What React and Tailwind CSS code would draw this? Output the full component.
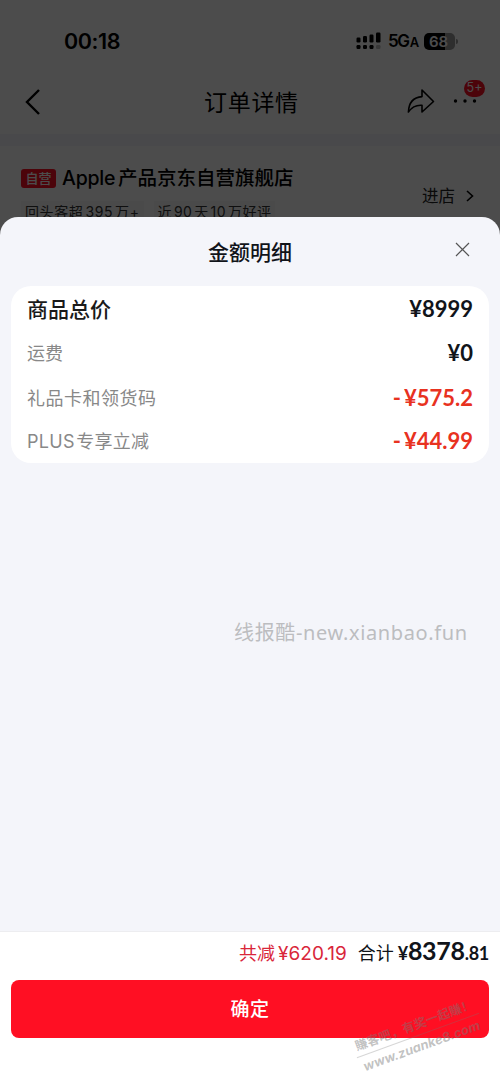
import React, { useState } from "react";

const rows = [
  {
    label: "商品总价",
    value: "¥8999",
    row: "h-[46px]",
    labelClass: "text-[21px] font-medium text-[#1a1a1a]",
    valueClass: "text-[#11141a]",
  },
  {
    label: "运费",
    value: "¥0",
    row: "h-[43px]",
    labelClass: "text-[18px] text-[#888888]",
    valueClass: "text-[#11141a]",
  },
  {
    label: "礼品卡和领货码",
    value: "¥575.2",
    minus: true,
    row: "h-[47px]",
    labelClass: "text-[18px] tracking-[0.5px] text-[#888888]",
    valueClass: "text-[#e8321f]",
  },
  {
    label: "PLUS 专享立减",
    value: "¥44.99",
    minus: true,
    row: "h-[39px]",
    labelClass: "text-[18px] tracking-[0.3px] text-[#888888] [word-spacing:-4px]",
    valueClass: "text-[#e8321f]",
  },
];

function StatusBar() {
  return (
    <div className="flex h-[82px] items-center pl-[64px] pr-[42px]">
      <span className="mt-px text-[21.5px] font-semibold leading-none tracking-[-0.4px] text-black">
        00:18
      </span>
      <svg className="ml-auto" width="26" height="18" viewBox="0 0 26 18">
        <rect x="0.5" y="5.5" width="4" height="5" rx="1.2" />
        <rect x="7" y="4" width="4" height="6.5" rx="1.2" />
        <rect x="13.5" y="2.5" width="4" height="8" rx="1.2" />
        <rect x="20" y="0.5" width="4.5" height="10" rx="1.2" />
        <rect x="0.5" y="13" width="4" height="4" rx="1.2" />
        <rect x="7" y="13" width="4" height="4" rx="1.2" />
        <rect x="13.5" y="13" width="4" height="4" rx="1.2" />
        <rect x="20" y="13" width="4.5" height="4" rx="1.2" opacity="0.25" />
      </svg>
      <span className="ml-[6px] mt-px w-[30px] whitespace-nowrap text-[17px] font-semibold leading-none tracking-[-1.4px] text-black">
        5G<span className="ml-px text-[13px]">A</span>
      </span>
      <div className="ml-[6px] flex h-[17px] w-[31px] items-center justify-center rounded-[5px] bg-[linear-gradient(to_right,#000_68%,#999_68%)] pr-[2px] text-[15px] font-semibold leading-none text-white">
        68
      </div>
      <div className="ml-px h-[5px] w-[2px] rounded-r bg-[#999]" />
    </div>
  );
}

function NavBar() {
  return (
    <div className="flex h-[52px] items-start pl-[24px] pr-[14px]">
      <svg
        className="mt-[6px]"
        width="18"
        height="28"
        viewBox="0 0 18 28"
        fill="none"
        stroke="#000"
        strokeWidth="2.4"
      >
        <path d="M15 2 L3 14 L15 26" />
      </svg>
      <h1 className="ml-[162px] mt-[4px] text-[23px] leading-[34px] tracking-[0.7px] text-black">
        订单详情
      </h1>
      <svg
        className="ml-auto mr-[-1px] mt-[6px]"
        width="28"
        height="26"
        viewBox="0 0 28 26"
        fill="none"
        stroke="#000"
        strokeWidth="1.6"
        strokeLinejoin="round"
      >
        <path d="M15 2 L26.5 13.5 L15 24 V17.3 C8.5 16.8 4.6 19.4 1.4 24 C1.8 14.6 6 9.3 15 8.6 Z" />
      </svg>
      <div className="relative ml-[18px] h-[40px] w-[34px]">
        <svg className="mt-[17px]" width="26" height="4" viewBox="0 0 26 4">
          <circle cx="3.5" cy="2" r="1.7" />
          <circle cx="13" cy="2" r="1.7" />
          <circle cx="22.5" cy="2" r="1.7" />
        </svg>
        <span className="absolute left-[12px] top-[-2px] flex h-[17px] w-[21px] items-center justify-center rounded-full bg-[#ff0f23] text-[12.5px] leading-none text-white">
          5+
        </span>
      </div>
    </div>
  );
}

function Shop() {
  return (
    <div className="flex justify-between pl-[21px] pr-[24px] pt-[18px]">
      <div>
        <div className="flex h-[28px] items-center">
          <span className="flex h-[19px] w-[35px] items-center justify-center rounded-[3px] bg-[#ff0f23] text-[13px] font-medium leading-none text-white">
            自营
          </span>
          <span className="ml-[6px] mt-[2px] whitespace-nowrap text-[19.5px] font-medium leading-none text-black [word-spacing:-2.5px]">
            <span className="tracking-[-0.2px]">Apple</span> 产品京东自营旗舰店
          </span>
        </div>
        <div className="mt-[9px] flex gap-[10px] whitespace-nowrap text-[14px] leading-[22px] text-[#333]">
          <span className="bg-[#f8f8f8] px-[4px] tracking-[0.6px] [word-spacing:-2.5px]">
            回头客超 395 万+
          </span>
          <span className="bg-[#f8f8f8] px-[4px] tracking-[0.5px] [word-spacing:-2.6px]">
            近 90 天 10 万好评
          </span>
        </div>
      </div>
      <div className="mt-[20px] flex h-[24px] items-center text-[16.5px] text-[#222]">
        进店
        <svg
          className="ml-[10px] mr-[1px]"
          width="10"
          height="14"
          viewBox="0 0 10 14"
          fill="none"
          stroke="#000"
          strokeWidth="1.6"
        >
          <path d="M2 2 L7.5 7 L2 12" />
        </svg>
      </div>
    </div>
  );
}

function AmountSheet({ onClose }) {
  return (
    <div className="relative flex h-[871px] flex-col rounded-t-[18px] bg-[#f4f5fa]">
      <div className="flex h-[69px] items-center pl-[208px] pr-[30px]">
        <h2 className="mt-px text-[21px] font-medium leading-none text-[#11141a]">
          金额明细
        </h2>
        <button className="mb-[5px] ml-auto" onClick={onClose}>
          <svg
            width="15"
            height="15"
            viewBox="0 0 15 15"
            fill="none"
            stroke="#555"
            strokeWidth="1.2"
          >
            <path d="M1 1 L14 14 M14 1 L1 14" />
          </svg>
        </button>
      </div>
      <div className="mx-[11px] h-[177px] rounded-[20px] bg-white pl-[16px] pr-[16px]">
        {rows.map((r) => (
          <div
            key={r.label}
            className={`flex items-center justify-between leading-none ${r.row}`}
          >
            <span className={r.labelClass}>{r.label}</span>
            <span
              className={`mb-px font-[Lato] text-[22px] font-bold ${r.valueClass}`}
            >
              {r.minus && <span className="mr-[3px]">-</span>}
              {r.value}
            </span>
          </div>
        ))}
      </div>
      <div className="mt-[155px] pl-[234px] text-[20px] leading-[30px] tracking-[0.63px] text-[#bcbdc0] whitespace-nowrap font-['Noto_Sans','Noto_Sans_CJK_SC',sans-serif]">
        线报酷-new.xianbao.fun
      </div>
      <div className="mt-auto h-[157px] border-t border-[#ededf0] bg-white px-[11px]">
        <div className="flex h-[48px] items-baseline justify-end whitespace-nowrap pt-[5px] leading-[26px]">
          <span className="text-[18px] text-[#d9263a]">
            共减
            <span className="ml-[3px] text-[19px]">¥620.19</span>
          </span>
          <span className="ml-[11px] text-[18px] text-[#11141a]">合计</span>
          <span className="ml-[4px] font-[Lato] text-[18px] font-bold tracking-[-0.3px] text-[#11141a]">
            ¥<span className="text-[25px]">8378</span>.81
          </span>
        </div>
        <button
          className="h-[58px] w-full rounded-[8px] bg-[#ff0f23] pt-[2px] text-[19px] font-medium tracking-[0.4px] text-white"
          onClick={onClose}
        >
          确定
        </button>
      </div>
      <div className="pointer-events-none absolute left-[353px] top-[798px] w-[130px] rotate-[-20deg] whitespace-nowrap text-center font-bold text-[#777]/45">
        <div className="border-b border-[#777]/30 text-[12.5px] leading-[20px]">
          賺客吧，有奖一起賺！
        </div>
        <div className="text-[13px] italic leading-[20px]">
          www.zuanke8.com
        </div>
      </div>
    </div>
  );
}

function App() {
  const [open, setOpen] = useState(true);

  return (
    <div className="relative h-[1088px] w-[500px] overflow-hidden bg-white font-[Inter,'Noto_Sans_CJK_SC',sans-serif]">
      <StatusBar />
      <NavBar />
      <div className="h-[12px] bg-[#f4f5fa]" />
      <Shop />
      {open && (
        <div className="absolute inset-0 flex flex-col justify-end bg-black/70">
          <AmountSheet onClose={() => setOpen(false)} />
        </div>
      )}
    </div>
  );
}

export default App;
